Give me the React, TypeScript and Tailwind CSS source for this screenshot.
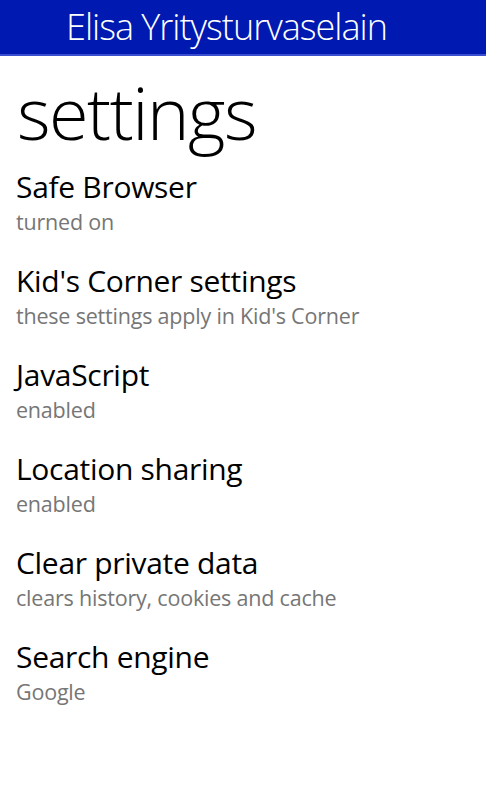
const items = [
  { title: "Safe Browser", sub: "turned on" },
  { title: "Kid's Corner settings", sub: "these settings apply in Kid's Corner" },
  { title: "JavaScript", sub: "enabled" },
  { title: "Location sharing", sub: "enabled" },
  { title: "Clear private data", sub: "clears history, cookies and cache" },
  { title: "Search engine", sub: "Google" },
];

export default function App() {
  return (
    <div className="min-h-[810px] w-[486px] bg-white font-['Open_Sans',sans-serif]">
      <header className="h-[56px] bg-[#0019b0] border-b-2 border-[#3a4fd0] flex items-center pl-[66px]">
        <span className="text-[36px] font-light text-white leading-none tracking-[-1px]">
          Elisa Yritysturvaselain
        </span>
      </header>
      <h1 className="pl-[17px] mt-[16px] text-[72px] font-light leading-[80px] text-black tracking-[-1.5px]">
        settings
      </h1>
      <ul className="mt-[17px] pl-[16px]">
        {items.map((it) => (
          <li key={it.title} className="h-[94px]">
            <div className="text-[30px] leading-[36px] text-black tracking-[-0.3px]">{it.title}</div>
            <div className="mt-[4px] text-[21.5px] leading-[26px] text-[#767676] tracking-[-0.2px]">{it.sub}</div>
          </li>
        ))}
      </ul>
    </div>
  );
}
